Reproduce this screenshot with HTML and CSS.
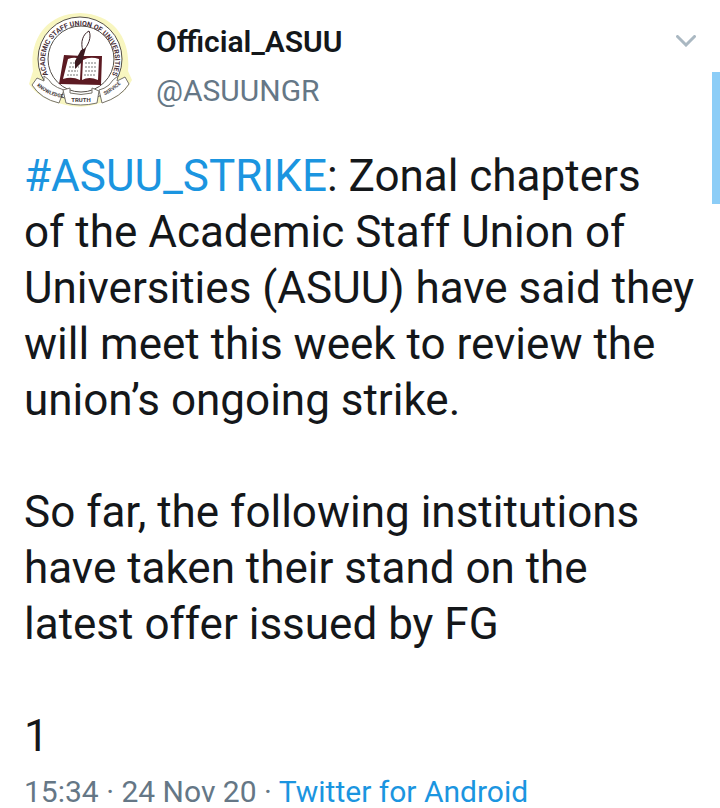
FILE: index.html
```html
<!DOCTYPE html>
<html lang="en">
<head>
  <meta charset="UTF-8" />
  <meta name="viewport" content="width=device-width, initial-scale=1" />
  <title>Official_ASUU</title>
  <link rel="stylesheet" href="styles.css">
</head>
<body>

  <article class="tweet">
    <header class="tweet-header">
      <!-- Union crest -->
      <svg class="avatar" viewBox="4 7 108 96" role="img" aria-label="Official_ASUU">
        <defs>
          <path id="ring" d="M28 70 A35 35 0 1 1 92 70" />
          <path id="left-banner" d="M16 80 Q28 91 44 93" />
          <path id="right-banner" d="M81 92 Q93 87 104 76" />
        </defs>
        <path class="crest-glow" d="M13 66 C9 36 25 9 60 8 C95 9 111 35 108 66 L112 75 Q102 94 80 98 Q60 105 42 99 Q20 95 9 79 Z" />
        <circle class="crest-disc" cx="60" cy="54" r="42" />
        <circle class="crest-line" cx="61" cy="54" r="33" />
        <text class="ring-text"><textPath href="#ring" startOffset="50%">ACADEMIC STAFF UNION OF UNIVERSITIES</textPath></text>

        <!-- Book -->
        <path class="book-cover" d="M44 50 L62 51 L82 51 L81 80 L39 79 Z" />
        <path class="book-page" d="M48 54 Q56 51 61 55 L60 75 Q52 71 43 74 Z" />
        <path class="book-page" d="M63 55 Q70 51 79 54 L78 75 Q69 71 62 75 Z" />
        <path class="book-lines" d="M50 58 L59 58 M49 62 L59 62 M48 66 L58 66 M47 70 L58 70 M65 58 L76 58 M65 62 L76 62 M65 66 L76 66 M64 70 L75 70" />

        <!-- Quill -->
        <path class="quill" d="M63 46 C60 37 63 29 69 26 C72 32 68 41 63 46 L60 55" />
        <path class="quill-nib" d="M61 45 L66 43 L62 57 L55 64 L55 56 Z" />

        <!-- Motto ribbon -->
        <path class="ribbon" d="M17 73 L24 76 L24 71 Q29 74 32 79 Q37 83 44 85 L39 98 Q21 94 12 80 Z" />
        <path class="ribbon" d="M105 72 L97 76 L98 71 Q93 74 89 80 Q84 84 79 85 L82 98 Q101 92 109 79 Z" />
        <path class="ribbon" d="M43 85 L50 83 L50 88 Q61 91 72 88 L72 83 L79 86 L77 98 Q60 102 46 98 Z" />
        <text class="motto"><textPath href="#left-banner" startOffset="50%">KNOWLEDGE</textPath></text>
        <text class="motto motto-center" x="61" y="97">TRUTH</text>
        <text class="motto"><textPath href="#right-banner" startOffset="50%">SERVICE</textPath></text>
      </svg>

      <div class="author">
        <div class="author-name">Official_ASUU</div>
        <div class="author-handle">@ASUUNGR</div>
      </div>

      <button class="menu-button" type="button" aria-label="More options">
        <svg viewBox="0 0 20 12" aria-hidden="true"><path d="M1.5 1.5 L10 10 L18.5 1.5" /></svg>
      </button>
    </header>

    <div class="tweet-text">
      <p><a href="#">#ASUU_STRIKE</a>: Zonal chapters<br>of the Academic Staff Union of Universities (ASUU) have said they will meet this week to review the union’s ongoing strike.</p>
      <p>So far, the following institutions have taken their stand on the latest offer issued by FG</p>
      <p>1</p>
    </div>

    <footer class="tweet-meta">15:34 · 24 Nov 20 · <a href="#">Twitter for Android</a></footer>
  </article>

  <!-- Scroll marker on the right edge -->
  <div class="scroll-marker"></div>

</body>
</html>
```

FILE: styles.css
```css
body {
  margin: 0;
  background-color: #fff;
  color: #14171a;
  font-family: Roboto, Arial, sans-serif;
  position: relative;
}

a {
  color: #1b95e0;
  text-decoration: none;
}

.tweet {
  padding: 12px 24px 0;
}

.tweet-header {
  display: flex;
  align-items: flex-start;
}

.avatar {
  width: 108px;
  height: 96px;
  flex: none;
}

.author {
  flex: 1;
  padding: 6px 0 0 24px;
}

.author-name,
.author-handle {
  font-size: 30px;
}

.author-name {
  font-weight: 600;
  line-height: 48px;
}

.author-handle {
  color: #657786;
  line-height: 50px;
}

.menu-button {
  margin-top: 23px;
  padding: 0;
  border: none;
  background: none;
  cursor: pointer;
}

.menu-button svg {
  display: block;
  width: 20px;
  height: 12px;
  fill: none;
  stroke: #aab8c2;
  stroke-width: 3;
  stroke-linecap: round;
}

.tweet-text {
  margin-top: 32px;
  font-size: 44px;
  line-height: 56px;
}

.tweet-text p {
  margin: 0 0 56px;
}

.tweet-text p:last-child {
  margin-bottom: 0;
}

.tweet-meta {
  margin-top: 8px;
  color: #657786;
  font-size: 30px;
  line-height: 40px;
}

.scroll-marker {
  position: absolute;
  top: 72px;
  right: 0;
  width: 8px;
  height: 132px;
  background-color: #8ccdf7;
}

/* Crest */
.crest-glow {
  fill: #f8f6c0;
}

.crest-disc {
  fill: #fff;
  stroke: #55504a;
  stroke-width: 1;
}

.crest-line {
  fill: none;
  stroke: #55504a;
  stroke-width: 1;
}

.ring-text {
  fill: #4a3038;
  font-size: 7px;
  font-weight: bold;
  text-anchor: middle;
}

.book-cover {
  fill: #5c1a22;
}

.book-page {
  fill: #fff;
}

.book-lines {
  fill: none;
  stroke: #777;
  stroke-width: 1;
  stroke-dasharray: 2 1;
}

.quill {
  fill: #fff;
  stroke: #3c2429;
  stroke-width: 1;
}

.quill-nib {
  fill: #3c1a20;
}

.ribbon {
  fill: #fff;
  stroke: #77736a;
  stroke-width: 1;
}

.motto {
  fill: #3f393a;
  font-size: 5px;
  font-weight: bold;
  text-anchor: middle;
}

.motto-center {
  font-size: 6px;
}
```
